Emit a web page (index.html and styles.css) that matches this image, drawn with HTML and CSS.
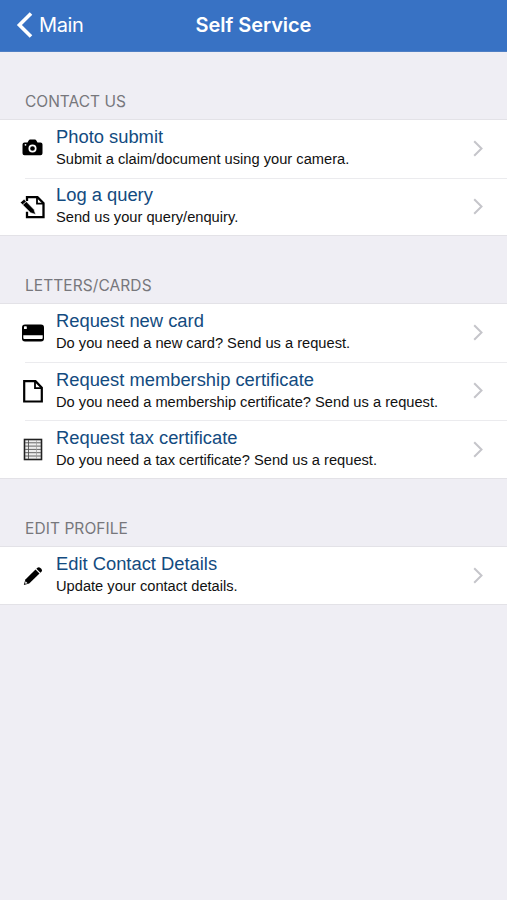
FILE: index.html
```html
<!DOCTYPE html>
<html lang="en">
<head>
<meta charset="utf-8">
<title>Self Service</title>
<link rel="stylesheet" href="styles.css">
</head>
<body>
<header class="nav">
  <a class="back"><svg width="17" height="28" viewBox="0 0 17 28"><path d="M15 2.500 3.400 14 15 25.500" fill="none" stroke="#fff" stroke-width="3.600"/></svg><span class="back-label">Main</span></a>
  <h1 class="title">Self Service</h1>
</header>
<main>
  <section class="section">
    <h2 class="heading contact">CONTACT US</h2>
    <ul class="list">
      <li class="row">
        <svg class="icon" viewBox="0 0 26 26"><path d="M4.500 7.500h3L9 5q.3-.5 1-.5h5q.7 0 1 .5l1.500 2.500h3q2 0 2 2v8.700q0 2-2 2h-16q-2 0-2-2V9.500q0-2 2-2Z"/><circle cx="12.500" cy="13.500" r="3.200" fill="none" stroke="#fff" stroke-width="1.700"/><circle cx="5.500" cy="9.800" r=".9" fill="#fff"/></svg>
        <div class="text"><h3 class="name">Photo submit</h3><p class="note">Submit a claim/document using your camera.</p></div>
        <svg class="chevron" viewBox="0 0 10 17"><path d="M1.200 1.200 8.500 8.500 1.200 15.800"/></svg>
      </li>
      <li class="row">
        <svg class="icon" viewBox="0 0 26 26"><path d="M7 7V3.200h10.500l6 6v14H7v-5.500" fill="none" stroke="#000" stroke-width="2.300"/><path d="M17 3.200v6.500h6.500" fill="none" stroke="#000" stroke-width="1.800"/><path d="m.3 8.500 3.800-3.300L14 15.500l1.700 5-5.200-1.800Z" stroke="#fff" stroke-width=".6"/><path d="m2.700 10.800 3.700-3.300" stroke="#fff" stroke-width=".8"/></svg>
        <div class="text"><h3 class="name">Log a query</h3><p class="note">Send us your query/enquiry.</p></div>
        <svg class="chevron" viewBox="0 0 10 17"><path d="M1.200 1.200 8.500 8.500 1.200 15.800"/></svg>
      </li>
    </ul>
  </section>
  <section class="section">
    <h2 class="heading">LETTERS/CARDS</h2>
    <ul class="list">
      <li class="row">
        <svg class="icon" viewBox="0 0 26 26"><rect x="2" y="4.500" width="22" height="17" rx="3"/><path d="M3.300 15.300h19.400v2.700q0 1-1 1H4.300q-1 0-1-1Z" fill="#fff"/><rect x="4" y="6.300" width="2.800" height="2.800" rx=".6" fill="#fff"/></svg>
        <div class="text"><h3 class="name">Request new card</h3><p class="note">Do you need a new card? Send us a request.</p></div>
        <svg class="chevron" viewBox="0 0 10 17"><path d="M1.200 1.200 8.500 8.500 1.200 15.800"/></svg>
      </li>
      <li class="row">
        <svg class="icon" viewBox="0 0 26 26"><path d="M4.200 3.200H15.500l6.300 6.500v13.800H4.200Z" fill="none" stroke="#000" stroke-width="2.200"/><path d="M15 3.200v7h6.700" fill="none" stroke="#000" stroke-width="1.800"/></svg>
        <div class="text"><h3 class="name">Request membership certificate</h3><p class="note">Do you need a membership certificate? Send us a request.</p></div>
        <svg class="chevron" viewBox="0 0 10 17"><path d="M1.200 1.200 8.500 8.500 1.200 15.800"/></svg>
      </li>
      <li class="row">
        <svg class="icon" viewBox="0 0 26 26"><rect x="4.500" y="3.500" width="17" height="20" fill="#eee" stroke="#222" stroke-width="1.600"/><path d="M5 6.800h16M5 10.100h16M5 13.400h16M5 16.700h16M5 20h16M8.500 4v19" fill="none" stroke="#555" stroke-width=".9"/><path d="M16.500 4v19" stroke="#999" stroke-width=".7"/></svg>
        <div class="text"><h3 class="name">Request tax certificate</h3><p class="note">Do you need a tax certificate? Send us a request.</p></div>
        <svg class="chevron" viewBox="0 0 10 17"><path d="M1.200 1.200 8.500 8.500 1.200 15.800"/></svg>
      </li>
    </ul>
  </section>
  <section class="section">
    <h2 class="heading">EDIT PROFILE</h2>
    <ul class="list">
      <li class="row">
        <svg class="icon" viewBox="0 0 26 26"><path d="m3.800 22 1.600-5.500L15.500 6.600l4 4L9.200 20.500Z"/><path d="m16.400 5.700 1-1q1.500-1.200 3 .2l.9.9q1.500 1.600.2 3l-1.100 1Z"/><path d="m5.600 18.200 2 2-2 .6-.6-.6Z" fill="#fff"/></svg>
        <div class="text"><h3 class="name">Edit Contact Details</h3><p class="note">Update your contact details.</p></div>
        <svg class="chevron" viewBox="0 0 10 17"><path d="M1.200 1.200 8.500 8.500 1.200 15.800"/></svg>
      </li>
    </ul>
  </section>
</main>
</body>
</html>
```
FILE: styles.css
```css
* { box-sizing: border-box; margin: 0; padding: 0; }
body { background: #efeef4; font-family: "Liberation Sans", Arial, sans-serif; }
.nav {
  height: 52px;
  display: grid;
  grid-template-columns: 1fr auto 1fr;
  align-items: center;
  padding: 0 16px 2px;
  background: #3872c4;
  border-bottom: 1px solid #4f7fc4;
  color: #fff;
  font-family: Inter, sans-serif;
}
.back { display: flex; align-items: center; gap: 6px; }
.back-label { font-size: 20px; letter-spacing: -.35px; }
.title { font-size: 20px; font-weight: 600; letter-spacing: -.05px; }
.heading {
  height: 67.500px;
  padding: 40.500px 25px 0;
  color: #77777c;
  font: 400 15.500px/20px Inter, sans-serif;
  letter-spacing: .07px;
}
.contact { height: 67px; padding-top: 40px; letter-spacing: 0; }
.list {
  list-style: none;
  background: #fff;
  border-top: 1px solid #e3e2e7;
  border-bottom: 1px solid #e3e2e7;
}
.row {
  height: 58.300px;
  display: flex;
  align-items: flex-start;
  padding-right: 24px;
  position: relative;
}
.row + .row::before {
  content: "";
  position: absolute;
  left: 25px;
  right: 0;
  top: -.8px;
  height: 1px;
  background: #ebebee;
}
.row:last-child { height: 56.700px; }
.icon { width: 26px; height: 26px; margin: 15.300px 0 0 19.500px; flex: none; }
.text { flex: 1; padding: 4.800px 0 0 10.500px; }
.name { font-size: 18.350px; line-height: 24px; font-weight: 400; color: #134b80; white-space: nowrap; }
.note { font-size: 14.660px; line-height: 20px; color: #111; white-space: nowrap; }
.chevron { width: 10px; height: 17px; margin-top: 19.700px; flex: none; }
.chevron path { fill: none; stroke: #c5c5ca; stroke-width: 2; }
```
